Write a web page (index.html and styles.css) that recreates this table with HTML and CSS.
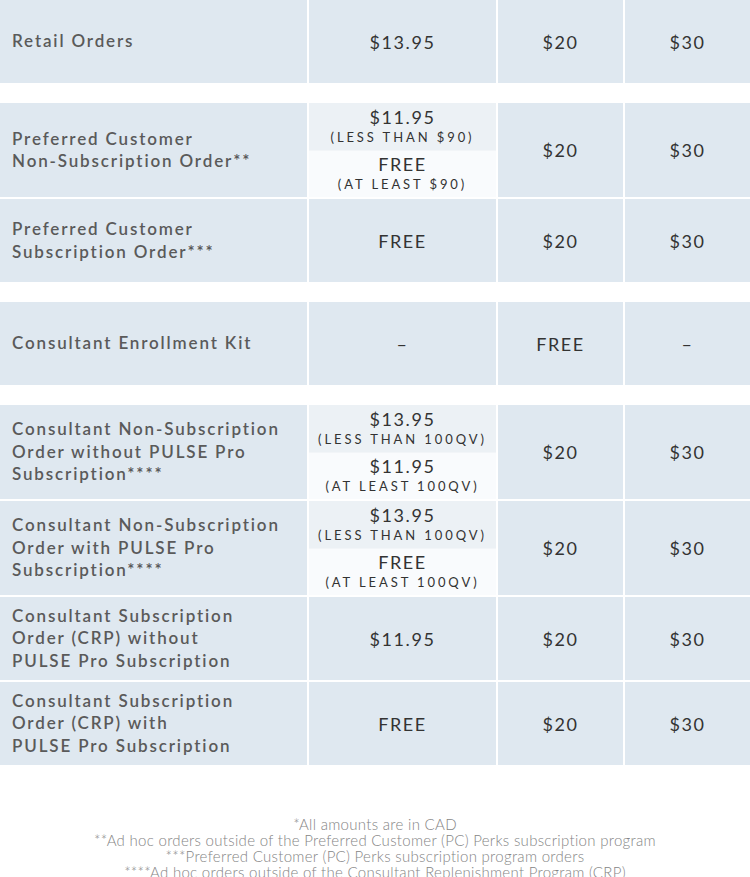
FILE: index.html
```html
<!DOCTYPE html>
<html>
<head>
<meta charset="utf-8">
<link rel="stylesheet" href="styles.css">
</head>
<body>
<div class="page">
  <div class="section">
    <div class="row">
      <div class="label">Retail Orders</div>
      <div class="cell">$13.95</div>
      <div class="cell">$20</div>
      <div class="cell">$30</div>
    </div>
  </div>

  <div class="section">
    <div class="row">
      <div class="label">Preferred Customer<br>Non-Subscription Order**</div>
      <div class="split">
        <div class="sub top"><span class="price">$11.95</span><span class="note">(Less than $90)</span></div>
        <div class="sub bottom"><span class="price">FREE</span><span class="note">(At least $90)</span></div>
      </div>
      <div class="cell">$20</div>
      <div class="cell">$30</div>
    </div>
    <div class="row">
      <div class="label">Preferred Customer<br>Subscription Order***</div>
      <div class="cell">FREE</div>
      <div class="cell">$20</div>
      <div class="cell">$30</div>
    </div>
  </div>

  <div class="section">
    <div class="row">
      <div class="label">Consultant Enrollment Kit</div>
      <div class="cell">–</div>
      <div class="cell">FREE</div>
      <div class="cell">–</div>
    </div>
  </div>

  <div class="section">
    <div class="row">
      <div class="label">Consultant Non-Subscription<br>Order without PULSE Pro<br>Subscription****</div>
      <div class="split">
        <div class="sub top"><span class="price">$13.95</span><span class="note">(Less than 100QV)</span></div>
        <div class="sub bottom"><span class="price">$11.95</span><span class="note">(At least 100QV)</span></div>
      </div>
      <div class="cell">$20</div>
      <div class="cell">$30</div>
    </div>
    <div class="row">
      <div class="label">Consultant Non-Subscription<br>Order with PULSE Pro<br>Subscription****</div>
      <div class="split">
        <div class="sub top"><span class="price">$13.95</span><span class="note">(Less than 100QV)</span></div>
        <div class="sub bottom"><span class="price">FREE</span><span class="note">(At least 100QV)</span></div>
      </div>
      <div class="cell">$20</div>
      <div class="cell">$30</div>
    </div>
    <div class="row">
      <div class="label">Consultant Subscription<br>Order (CRP) without<br>PULSE Pro Subscription</div>
      <div class="cell">$11.95</div>
      <div class="cell">$20</div>
      <div class="cell">$30</div>
    </div>
    <div class="row">
      <div class="label">Consultant Subscription<br>Order (CRP) with<br>PULSE Pro Subscription</div>
      <div class="cell">FREE</div>
      <div class="cell">$20</div>
      <div class="cell">$30</div>
    </div>
  </div>

  <div class="footer">
    <p>*All amounts are in CAD</p>
    <p>**Ad hoc orders outside of the Preferred Customer (PC) Perks subscription program</p>
    <p>***Preferred Customer (PC) Perks subscription program orders</p>
    <p>****Ad hoc orders outside of the Consultant Replenishment Program (CRP)</p>
  </div>
</div>
</body>
</html>
```

FILE: styles.css
```css
html, body {
  margin: 0;
  padding: 0;
  background: #ffffff;
}

.page {
  width: 750px;
  font-family: "Lato", "Liberation Sans", sans-serif;
}

.section {
  display: flex;
  flex-direction: column;
  gap: 2px;
  margin-bottom: 20px;
}

.row {
  display: grid;
  grid-template-columns: 307px 187px 125px 125px;
  column-gap: 2px;
  min-height: 83px;
}

.label {
  background: #dfe8f0;
  color: #5a5a5a;
  font-size: 17px;
  font-weight: 600;
  letter-spacing: 1.85px;
  line-height: 22.5px;
  padding: 7px 12px;
  display: flex;
  align-items: center;
}

.cell {
  background: #dfe8f0;
  color: #333333;
  font-size: 18px;
  letter-spacing: 1.6px;
  display: flex;
  align-items: center;
  justify-content: center;
  text-align: center;
}

.split {
  display: flex;
  flex-direction: column;
}

.sub {
  flex: 1;
  display: flex;
  flex-direction: column;
  align-items: center;
  justify-content: center;
  color: #333333;
  padding: 4px 0;
}

.sub.top {
  background: #ecf1f5;
}

.sub.bottom {
  background: #f9fbfd;
  border-top: 1px solid #f2f5f8;
  padding-top: 3px;
}

.price {
  font-size: 18px;
  letter-spacing: 1.6px;
  line-height: 21px;
}

.note {
  font-size: 13px;
  letter-spacing: 2.9px;
  text-transform: uppercase;
  line-height: 18px;
}

.footer {
  margin-top: 51px;
  text-align: center;
  color: #858585;
  font-size: 15px;
  font-weight: 300;
  letter-spacing: 0.3px;
  line-height: 16px;
}

.footer p {
  margin: 0;
}
```
